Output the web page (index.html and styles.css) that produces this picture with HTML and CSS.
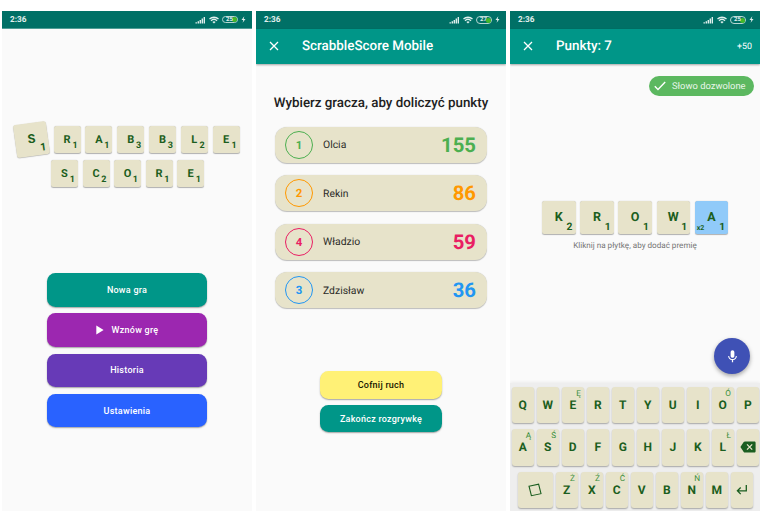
FILE: index.html
```html
<!DOCTYPE html>
<html lang="pl">
<head>
<meta charset="utf-8">
<title>ScrabbleScore Mobile</title>
<link rel="stylesheet" href="styles.css">
</head>
<body>
<svg class="sprite" aria-hidden="true">
  <symbol id="signal" viewBox="0 0 11 8"><path d="M.5 6.3h1.4v1.2H.5zM2.6 5.3h1.400v2.200H2.600zM4.600 4h1.400v3.500H4.600zM6.600 2.600H8v4.900H6.600zM8.600 1H10v6.500H8.600z"/></symbol>
  <symbol id="wifi" viewBox="0 0 10 8"><path d="M5 7.6 3.4 5.9a2.3 2.3 0 0 1 3.2 0z"/><path d="M.5 3a6.6 6.6 0 0 1 9 0M2 4.7a4.4 4.4 0 0 1 6 0" fill="none" stroke="currentColor" stroke-width="1.3"/></symbol>
  <symbol id="bolt" viewBox="0 0 5 7"><path d="M3.3.2.5 3.9h1.8L1.6 6.8l2.9-3.9H2.7z"/></symbol>
  <symbol id="close" viewBox="0 0 10 10"><path d="m1 1 8 8m0-8-8 8" fill="none" stroke="currentColor" stroke-width="1.3"/></symbol>
</svg>
<main class="screens">

  <section class="phone">
    <header class="status status-plain">
      <span class="time">2:36</span>
      <svg class="signal"><use href="#signal"/></svg><svg class="wifi"><use href="#wifi"/></svg>
      <span class="battery"><i></i><b>25</b></span><svg class="bolt"><use href="#bolt"/></svg>
    </header>
    <div class="logo">
      <div class="word word-top">
        <span class="tile tile-tilted">S<sub>1</sub></span><span class="tile">R<sub>1</sub></span><span class="tile">A<sub>1</sub></span><span class="tile">B<sub>3</sub></span><span class="tile">B<sub>3</sub></span><span class="tile">L<sub>2</sub></span><span class="tile">E<sub>1</sub></span>
      </div>
      <div class="word">
        <span class="tile">S<sub>1</sub></span><span class="tile">C<sub>2</sub></span><span class="tile">O<sub>1</sub></span><span class="tile">R<sub>1</sub></span><span class="tile">E<sub>1</sub></span>
      </div>
    </div>
    <nav class="menu">
      <button class="btn teal">Nowa gra</button>
      <button class="btn purple"><svg class="play" viewBox="0 0 8 10"><path d="M.3.6v8.8L7.6 5z"/></svg>Wznów grę</button>
      <button class="btn violet">Historia</button>
      <button class="btn blue">Ustawienia</button>
    </nav>
  </section>

  <section class="phone">
    <header class="status">
      <span class="time">2:36</span>
      <svg class="signal"><use href="#signal"/></svg><svg class="wifi"><use href="#wifi"/></svg>
      <span class="battery"><i></i><b>27</b></span><svg class="bolt"><use href="#bolt"/></svg>
    </header>
    <div class="appbar"><svg class="close"><use href="#close"/></svg><h1>ScrabbleScore Mobile</h1></div>
    <h2>Wybierz gracza, aby doliczyć punkty</h2>
    <div class="players">
      <div class="player green"><span class="place">1</span><span class="name">Olcia</span><strong>155</strong></div>
      <div class="player orange"><span class="place">2</span><span class="name">Rekin</span><strong>86</strong></div>
      <div class="player pink"><span class="place">4</span><span class="name">Władzio</span><strong>59</strong></div>
      <div class="player sky"><span class="place">3</span><span class="name">Zdzisław</span><strong>36</strong></div>
    </div>
    <div class="actions">
      <button class="btn yellow">Cofnij ruch</button>
      <button class="btn teal">Zakończ rozgrywkę</button>
    </div>
  </section>

  <section class="phone entry">
    <header class="status">
      <span class="time">2:36</span>
      <svg class="signal"><use href="#signal"/></svg><svg class="wifi"><use href="#wifi"/></svg>
      <span class="battery"><i></i><b>25</b></span><svg class="bolt"><use href="#bolt"/></svg>
    </header>
    <div class="appbar"><svg class="close"><use href="#close"/></svg><h1>Punkty: 7</h1><span class="bonus">+50</span></div>
    <div class="chip"><svg class="check" viewBox="0 0 12 10"><path d="m.8 5.2 3.2 3.2L11.2 1"/></svg><span>Słowo dozwolone</span></div>
    <div class="played">
      <span class="tile">K<sub>2</sub></span><span class="tile">R<sub>1</sub></span><span class="tile">O<sub>1</sub></span><span class="tile">W<sub>1</sub></span><span class="tile premium">A<sub>1</sub><small>x2</small></span>
    </div>
    <p class="hint">Kliknij na płytkę, aby dodać premię</p>
    <button class="mic"><svg viewBox="0 0 24 24"><path d="M12 14c1.66 0 3-1.34 3-3V5c0-1.66-1.34-3-3-3S9 3.340 9 5v6c0 1.660 1.340 3 3 3zm5.300-3c0 3-2.540 5.100-5.300 5.100S6.700 14 6.700 11H5c0 3.410 2.720 6.230 6 6.720V21h2v-3.280c3.280-.48 6-3.300 6-6.720z"/></svg></button>
    <div class="keyboard">
      <div class="keys">
        <span class="key">Q</span><span class="key">W</span><span class="key">E<sup>Ę</sup></span><span class="key">R</span><span class="key">T</span><span class="key">Y</span><span class="key">U</span><span class="key">I</span><span class="key">O<sup>Ó</sup></span><span class="key">P</span>
      </div>
      <div class="keys">
        <span class="key">A<sup>Ą</sup></span><span class="key">S<sup>Ś</sup></span><span class="key">D</span><span class="key">F</span><span class="key">G</span><span class="key">H</span><span class="key">J</span><span class="key">K</span><span class="key">L<sup>Ł</sup></span><span class="key"><svg class="erase" viewBox="0 0 16 12"><path d="M5 .4h9.300c.8 0 1.300.5 1.300 1.300v8.600c0 .8-.5 1.300-1.300 1.300H5c-.6 0-1-.2-1.300-.7L.4 6l3.300-4.900C4 .6 4.400.4 5 .4z"/><path class="cross" d="m7 3.400 5.200 5.200m0-5.200L7 8.600"/></svg></span>
      </div>
      <div class="keys keys-last">
        <span class="key key-blank"><svg viewBox="0 0 14 14"><path d="m1 3.200 9.600-2L13 10.700l-9.600 2z"/></svg></span><span class="key">Z<sup>Ż</sup></span><span class="key">X<sup>Ź</sup></span><span class="key">C<sup>Ć</sup></span><span class="key">V</span><span class="key">B</span><span class="key">N<sup>Ń</sup></span><span class="key">M</span><span class="key"><svg class="enter" viewBox="0 0 12 12"><path d="M10.300 1v5.800H1.500M4.700 3.500 1.400 6.800l3.300 3.300"/></svg></span>
      </div>
    </div>
  </section>

</main>
</body>
</html>
```
FILE: styles.css
```css
* { box-sizing: border-box; }
body {
  margin: 0;
  background: #fff;
  font-family: Roboto, "Liberation Sans", sans-serif;
  color: #212121;
  text-rendering: geometricPrecision;
}
.sprite { position: absolute; width: 0; height: 0; }
svg { display: block; fill: currentColor; flex: none; }
button { border: 0; padding: 0; font: inherit; }
.screens { display: flex; gap: 4px; padding: 11px 0 0 2px; width: 761px; }
.phone {
  width: 250px;
  height: 500px;
  flex: none;
  display: flex;
  flex-direction: column;
  background: #fafafa;
  overflow: hidden;
}

.status {
  height: 17.5px;
  flex: none;
  display: flex;
  align-items: center;
  padding: 0 6.5px 0 8px;
  background: #007066;
  color: #e0efed;
}
.status-plain { border-bottom: 1px solid #4f9d96; height: 18px; }
.time { font-size: 8.2px; font-weight: 700; margin-right: auto; padding-top: 1px; }
.signal { width: 11px; height: 8px; margin-right: 3px; }
.wifi { width: 10px; height: 8px; margin-right: 3.5px; }
.bolt { width: 5px; height: 7px; margin-left: 2.5px; }
.battery {
  position: relative;
  width: 16px;
  height: 7.5px;
  border: 0.8px solid #b5d6d2;
  border-radius: 4px;
  font-size: 6px;
  line-height: 6px;
  text-align: center;
}
.battery b { position: relative; display: block; margin-left: -1px; font-weight: 700; }
.battery i {
  position: absolute;
  right: 0;
  top: 0.5px;
  width: 5px;
  height: 5px;
  border-radius: 50%;
  background: #43b82a;
}

.appbar {
  height: 35.5px;
  flex: none;
  display: flex;
  align-items: center;
  padding: 0 8px 0 13px;
  background: #009688;
  color: #fff;
  box-shadow: 0 1px 2px rgba(0, 0, 0, .35);
}
.close { width: 10px; height: 10px; }
h1 { margin: 0 auto 0 23px; padding-top: 1.5px; font-size: 13.4px; font-weight: 500; line-height: 16px; }
.bonus { font-size: 8.9px; padding-top: 1px; }

.logo { padding-top: 94px; height: 244px; flex: none; }
.word { display: flex; gap: 4.5px; padding-left: 49px; }
.word-top { gap: 4.8px; padding-left: 12.5px; margin-bottom: 5px; align-items: center; height: 32px; }
.tile {
  position: relative;
  width: 27px;
  height: 27px;
  flex: none;
  border-radius: 2.5px;
  background: #e7e3ca;
  box-shadow: 0 0.5px 1px rgba(0, 0, 0, .3);
  color: #1b5e20;
  font-size: 11px;
  font-weight: 700;
  line-height: 28px;
  text-align: center;
}
.tile sub {
  position: absolute;
  right: 3px;
  bottom: 2px;
  font-size: 9px;
  line-height: 10px;
}
.tile-tilted { width: 33px; height: 33px; line-height: 33px; transform: rotate(-8deg); margin: 0 1.3px 0 0; }
.tile-tilted { font-size: 12.5px; }
.tile-tilted sub { font-size: 10.5px; line-height: 11px; }

.btn {
  display: flex;
  align-items: center;
  justify-content: center;
  border-radius: 8.5px;
  color: #fff;
  font-size: 9px;
  font-weight: 500;
  letter-spacing: 0.25px;
  box-shadow: 0 1px 1.5px rgba(0, 0, 0, .35);
}
.menu { display: flex; flex-direction: column; align-items: center; gap: 6.7px; }
.menu .btn { width: 159.5px; height: 33.6px; }
.play { width: 8px; height: 10px; margin-right: 8px; }
.teal { background: #009688; }
.purple { background: #9c27b0; }
.violet { background: #673ab7; }
.blue { background: #2962ff; }
.yellow { background: #fff176; color: #151500; }

h2 { margin: 31px 0 0; font-size: 13.35px; font-weight: 500; line-height: 17px; text-align: center; white-space: nowrap; }
.players { display: flex; flex-direction: column; gap: 12.6px; padding: 15px 19px 0; }
.player {
  height: 35.8px;
  display: flex;
  align-items: center;
  padding: 0 11px 0 10px;
  border-radius: 12px;
  background: #e7e3ca;
  box-shadow: 0 0.5px 1px rgba(0, 0, 0, .25);
}
.place {
  width: 28px;
  height: 28px;
  border: 1px solid currentColor;
  border-radius: 50%;
  font-size: 11.4px;
  font-weight: 700;
  line-height: 26px;
  text-align: center;
}
.name { margin: 0 auto 0 10px; font-size: 10.4px; color: #2b2b28; }
.player strong { font-size: 20.3px; font-weight: 700; }
.green { color: #4caf50; }
.orange { color: #ff9800; }
.pink { color: #e91e63; }
.sky { color: #2196f3; }
.actions { display: flex; flex-direction: column; align-items: center; gap: 6.2px; padding-top: 63.5px; }
.actions .btn { width: 121.5px; height: 27.4px; }

.entry { position: relative; }
.chip {
  align-self: flex-end;
  display: flex;
  align-items: center;
  width: 105px;
  height: 20.5px;
  margin: 11.5px 6px 0 0;
  padding-left: 5px;
  border-radius: 10.25px;
  background: #5cb860;
  color: #e9f6ea;
  font-size: 9.4px;
}
.chip span { padding-top: 1px; }
.check { width: 12px; height: 10px; margin-right: 6px; fill: none; stroke: #fff; stroke-width: 1.4; }
.played { display: flex; gap: 4.7px; padding: 104.5px 0 0 32px; }
.played .tile { width: 33.5px; height: 33.5px; line-height: 34px; font-size: 12.5px; }
.played sub { font-size: 10.3px; line-height: 10px; right: 3px; bottom: 2px; }
.played .premium { background: #90caf9; }
.premium small { position: absolute; left: 2px; bottom: 2px; font-size: 7px; line-height: 8px; }
.hint { margin: 6px 0 0; font-size: 8.1px; line-height: 11px; text-align: center; color: #757575; }
.mic {
  position: absolute;
  right: 10px;
  bottom: 137px;
  width: 36px;
  height: 36px;
  display: grid;
  place-items: center;
  border-radius: 50%;
  background: #3f51b5;
  color: #fff;
  box-shadow: 0 2px 4px rgba(0, 0, 0, .35);
}
.mic svg { width: 15px; height: 15px; }
.keyboard {
  display: flex;
  flex-direction: column;
  gap: 6.3px;
  margin-top: auto;
  padding: 4px 0 3px 2px;
  background: #eeeeee;
  box-shadow: 0 -1px 3px rgba(0, 0, 0, .06);
}
.keys { display: flex; gap: 3.5px; }
.keys-last { padding-left: 6px; }
.key {
  position: relative;
  width: 21.5px;
  height: 36.2px;
  flex: none;
  display: grid;
  place-items: center;
  border-radius: 3px;
  background: #e7e3ca;
  box-shadow: 0 1px 1.5px rgba(0, 0, 0, .3);
  color: #1b5e20;
  font-size: 12px;
  font-weight: 700;
}
.key sup { position: absolute; top: 3px; right: 2.5px; font-size: 8.2px; line-height: 9px; font-weight: 400; color: #388e3c; }
.key-blank { width: 34.5px; }
.key-blank svg { width: 14px; height: 14px; fill: none; stroke: currentColor; stroke-width: 1.1; }
.erase { width: 16px; height: 12px; }
.cross { stroke: #e7e3ca; stroke-width: 1.3; }
.enter { width: 12px; height: 12px; fill: none; stroke: currentColor; stroke-width: 1.3; }
```
